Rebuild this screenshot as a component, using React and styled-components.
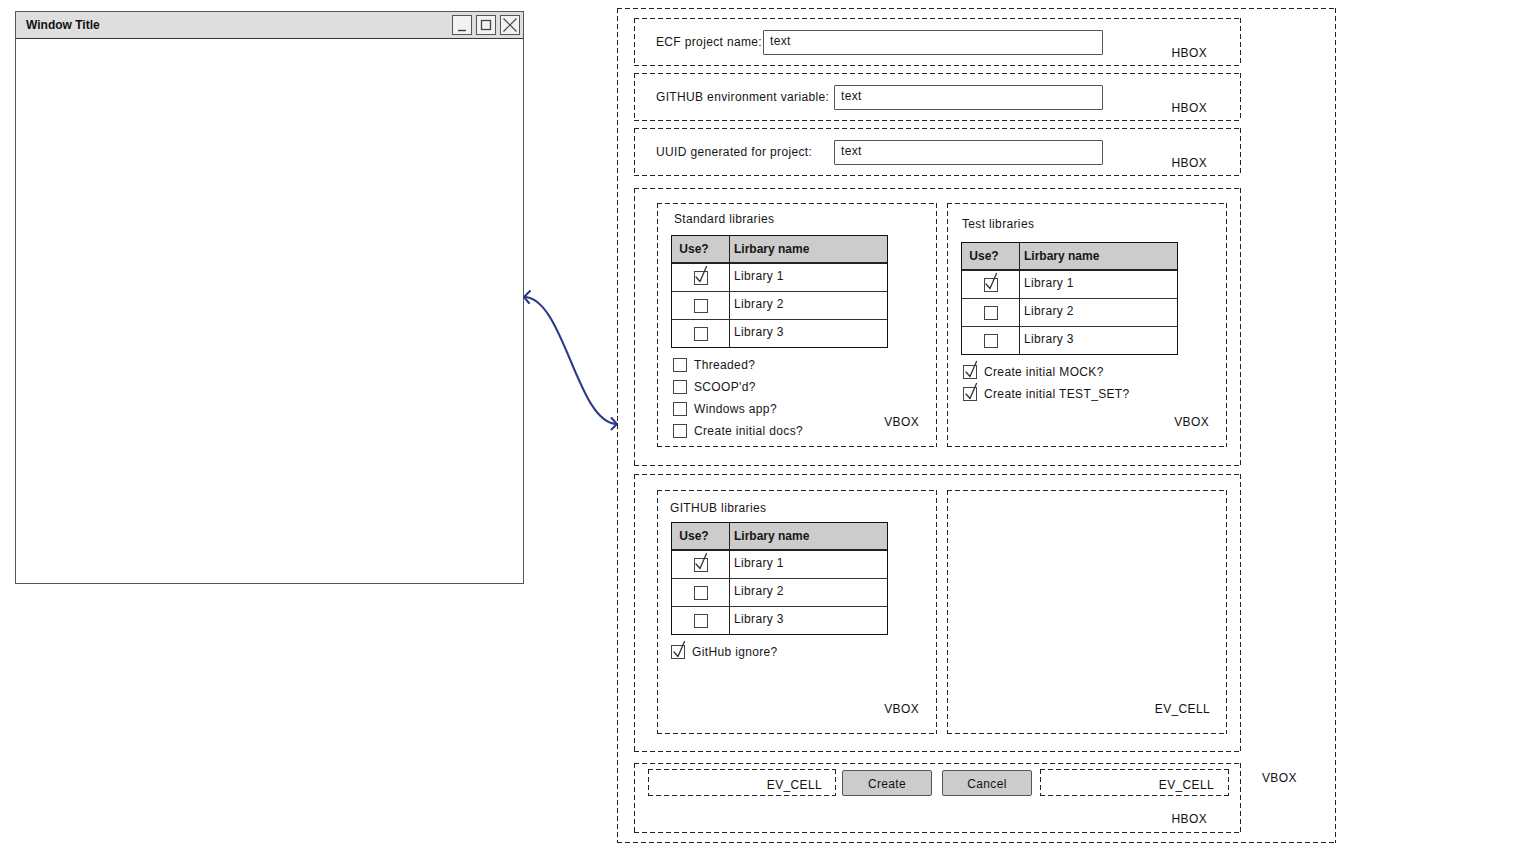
import React from 'react';
import styled, { createGlobalStyle, css } from 'styled-components';

const FONT = `"Liberation Sans", Arial, sans-serif`;

const GlobalStyle = createGlobalStyle`
  html, body { margin: 0; padding: 0; background: #fff; }
  body { font-family: ${FONT}; font-size: 12px; letter-spacing: 0.35px; color: #161616; }
`;

const dashed = css`
  background-image:
    linear-gradient(to right, #222 5px, transparent 5px),
    linear-gradient(to right, #222 5px, transparent 5px),
    linear-gradient(to bottom, #222 5px, transparent 5px),
    linear-gradient(to bottom, #222 5px, transparent 5px);
  background-size: 8px 1px, 8px 1px, 1px 8px, 1px 8px;
  background-position: 0 0, 0 100%, 0 0, 100% 0;
  background-repeat: repeat-x, repeat-x, repeat-y, repeat-y;
`;

const Canvas = styled.div`
  display: flex;
  align-items: flex-start;
  padding-left: 15px;
  width: 1531px;
  height: 854px;
  box-sizing: border-box;
  overflow: hidden;
`;

/* ---------- Window mockup ---------- */
const Window = styled.div`
  flex-shrink: 0;
  width: 509px;
  height: 573px;
  margin-top: 11px;
  box-sizing: border-box;
  border: 1px solid #555;
  background: #fff;
  display: flex;
  flex-direction: column;
`;

const TitleBar = styled.div`
  height: 27px;
  box-sizing: border-box;
  background: #dedede;
  border-bottom: 1.5px solid #333;
  display: flex;
  align-items: center;
  justify-content: space-between;
  padding: 0 3px 0 10px;
`;

const WinTitle = styled.span`
  font-weight: bold;
  font-size: 12px;
  letter-spacing: 0;
  color: #111;
`;

const WinButtons = styled.div`
  display: flex;
  gap: 4px;
`;

const WinButton = styled.div`
  width: 20px;
  height: 20px;
  box-sizing: border-box;
  border: 1.5px solid #555;
  background: #f2f2f2;
  display: flex;
  align-items: center;
  justify-content: center;
  svg { display: block; }
`;

/* ---------- Connector ---------- */
const Connector = styled.svg`
  flex-shrink: 0;
  width: 93px;
  height: 440px;
  overflow: visible;
`;

/* ---------- Layout containers ---------- */
const OuterVBox = styled.div`
  ${dashed};
  flex-shrink: 0;
  width: 719px;
  height: 835px;
  margin-top: 8px;
  box-sizing: border-box;
  padding: 10px 0 0 17px;
  display: flex;
  align-items: flex-start;
`;

const Column = styled.div`
  width: 607px;
  display: flex;
  flex-direction: column;
`;

const Tag = styled.span`
  font-size: 12px;
  line-height: 14px;
  color: #111;
  white-space: nowrap;
`;

const CornerTag = styled(Tag)`
  position: absolute;
  right: ${p => p.$r}px;
  bottom: ${p => p.$b}px;
`;

const OuterTag = styled(Tag)`
  align-self: flex-end;
  margin: 0 0 58px 21px;
`;

const FieldBox = styled.div`
  ${dashed};
  position: relative;
  height: 48px;
  box-sizing: border-box;
  margin-top: ${p => p.$mt}px;
  padding-left: 22px;
  display: flex;
  align-items: center;
`;

const FieldLabel = styled.span`
  width: ${p => p.$w}px;
  flex-shrink: 0;
  white-space: nowrap;
`;

const TextInput = styled.div`
  width: ${p => p.$w}px;
  height: 25px;
  box-sizing: border-box;
  border: 1.5px solid #555;
  border-radius: 1px;
  padding: 3px 6px 0;
  line-height: 14px;
  background: #fff;
`;

const PanelRow = styled.div`
  ${dashed};
  height: 278px;
  box-sizing: border-box;
  margin-top: ${p => p.$mt}px;
  padding: ${p => p.$pt}px 14px 0 23px;
  display: flex;
  align-items: flex-start;
  gap: 10px;
`;

const SubPanel = styled.div`
  ${dashed};
  position: relative;
  width: 280px;
  height: 244px;
  box-sizing: border-box;
  padding: ${p => p.$pt}px 0 0 14px;
  display: flex;
  flex-direction: column;
  align-items: flex-start;
`;

const PanelTitle = styled.div`
  line-height: 16px;
  margin-left: ${p => p.$indent}px;
  margin-bottom: ${p => p.$mb}px;
  white-space: nowrap;
`;

/* ---------- Table ---------- */
const Table = styled.div`
  width: 217px;
  box-sizing: border-box;
  border: 1px solid #111;
`;

const HeaderRow = styled.div`
  display: grid;
  grid-template-columns: 58px 1fr;
  height: 26px;
  background: #cccccc;
  border-bottom: 2px solid #222;
  font-weight: bold;
  letter-spacing: 0;
`;

const Row = styled.div`
  display: grid;
  grid-template-columns: 58px 1fr;
  height: 27px;
  border-top: ${p => (p.$first ? 'none' : '1px solid #333')};
`;

const Cell = styled.div`
  display: flex;
  align-items: center;
  justify-content: ${p => (p.$center ? 'center' : 'flex-start')};
  padding-left: ${p => (p.$center ? 0 : 4)}px;
  padding-bottom: ${p => (p.$raise ? 3 : 0)}px;
  border-right: ${p => (p.$divider ? '1px solid #222' : 'none')};
`;

/* ---------- Checkboxes ---------- */
const BoxWrap = styled.span`
  position: relative;
  display: inline-block;
  flex-shrink: 0;
  width: 14px;
  height: 14px;
  box-sizing: border-box;
  border: 1.5px solid #444;
  background: #fff;
  svg {
    position: absolute;
    left: -1.5px;
    top: -6.5px;
    overflow: visible;
  }
`;

const CheckList = styled.div`
  margin-top: 6px;
  padding-left: ${p => p.$pl}px;
  display: flex;
  flex-direction: column;
`;

const CheckItem = styled.div`
  height: 22px;
  display: flex;
  align-items: center;
  gap: 7px;
  white-space: nowrap;
`;

/* ---------- Bottom buttons ---------- */
const ButtonRow = styled.div`
  ${dashed};
  position: relative;
  height: 70px;
  box-sizing: border-box;
  margin-top: 11px;
  padding: 6px 0 0 14px;
  display: flex;
  align-items: flex-start;
`;

const EvCell = styled.div`
  ${dashed};
  position: relative;
  width: ${p => p.$w}px;
  height: 27px;
  margin-left: ${p => p.$ml}px;
  box-sizing: border-box;
`;

const Button = styled.div`
  width: 90px;
  height: 26px;
  margin-top: 1px;
  margin-left: ${p => p.$ml}px;
  box-sizing: border-box;
  border: 1.5px solid #555;
  border-radius: 2px;
  background: #cccccc;
  display: flex;
  align-items: center;
  justify-content: center;
  padding-top: 1px;
  color: #111;
`;

/* ---------- Pieces ---------- */
function Checkbox({ checked }) {
  return (
    <BoxWrap>
      {checked && (
        <svg width="16" height="20" viewBox="0 0 16 20">
          <path d="M3 12 L7 16.5 L13.5 1.5" fill="none" stroke="#333" strokeWidth="1.3" strokeLinejoin="round" strokeLinecap="round" />
        </svg>
      )}
    </BoxWrap>
  );
}

function LibTable({ rows }) {
  return (
    <Table>
      <HeaderRow>
        <Cell $divider>&nbsp;Use?</Cell>
        <Cell>Lirbary name</Cell>
      </HeaderRow>
      {rows.map((r, i) => (
        <Row key={r.name} $first={i === 0}>
          <Cell $divider $center><Checkbox checked={r.checked} /></Cell>
          <Cell $raise>{r.name}</Cell>
        </Row>
      ))}
    </Table>
  );
}

const libs = [
  { name: 'Library 1', checked: true },
  { name: 'Library 2', checked: false },
  { name: 'Library 3', checked: false },
];

const fields = [
  { label: 'ECF project name:', lw: 107, iw: 340, mt: 0 },
  { label: 'GITHUB environment variable:', lw: 178, iw: 269, mt: 7 },
  { label: 'UUID generated for project:', lw: 178, iw: 269, mt: 7 },
];

export default function App() {
  return (
    <>
      <GlobalStyle />
      <Canvas>
        <Window>
          <TitleBar>
            <WinTitle>Window Title</WinTitle>
            <WinButtons>
              <WinButton>
                <svg width="14" height="14" viewBox="0 0 14 14"><path d="M3 12.5 H11" stroke="#444" strokeWidth="1.4" /></svg>
              </WinButton>
              <WinButton>
                <svg width="14" height="14" viewBox="0 0 14 14"><rect x="2.5" y="2.5" width="9" height="9" fill="none" stroke="#444" strokeWidth="1.3" /></svg>
              </WinButton>
              <WinButton>
                <svg width="16" height="16" viewBox="0 0 16 16"><path d="M1.5 1.5 L14.5 14.5 M14.5 1.5 L1.5 14.5" stroke="#444" strokeWidth="1.2" /></svg>
              </WinButton>
            </WinButtons>
          </TitleBar>
        </Window>

        <Connector viewBox="0 0 93 440">
          <g fill="none" stroke="#2b3a8a" strokeWidth="2" strokeLinecap="round" strokeLinejoin="round">
            <path d="M0 297 C40 297, 53 424, 93 424" />
            <path d="M6 291 L0 297 L5 303" />
            <path d="M87.5 418 L93 424 L87.5 429.5" />
          </g>
        </Connector>

        <OuterVBox>
          <Column>
            {fields.map(f => (
              <FieldBox key={f.label} $mt={f.mt}>
                <FieldLabel $w={f.lw}>{f.label}</FieldLabel>
                <TextInput $w={f.iw}>text</TextInput>
                <CornerTag $r={34} $b={6}>HBOX</CornerTag>
              </FieldBox>
            ))}

            <PanelRow $mt={12} $pt={15}>
              <SubPanel $pt={8}>
                <PanelTitle $indent={3} $mb={8}>Standard libraries</PanelTitle>
                <LibTable rows={libs} />
                <CheckList $pl={2}>
                  <CheckItem><Checkbox />Threaded?</CheckItem>
                  <CheckItem><Checkbox />SCOOP'd?</CheckItem>
                  <CheckItem><Checkbox />Windows app?</CheckItem>
                  <CheckItem><Checkbox />Create initial docs?</CheckItem>
                </CheckList>
                <CornerTag $r={18} $b={18}>VBOX</CornerTag>
              </SubPanel>
              <SubPanel $pt={13}>
                <PanelTitle $indent={1} $mb={10}>Test libraries</PanelTitle>
                <LibTable rows={libs} />
                <CheckList $pl={2}>
                  <CheckItem><Checkbox checked />Create initial MOCK?</CheckItem>
                  <CheckItem><Checkbox checked />Create initial TEST_SET?</CheckItem>
                </CheckList>
                <CornerTag $r={18} $b={18}>VBOX</CornerTag>
              </SubPanel>
            </PanelRow>

            <PanelRow $mt={8} $pt={16}>
              <SubPanel $pt={10}>
                <PanelTitle $indent={-1} $mb={6}>GITHUB libraries</PanelTitle>
                <LibTable rows={libs} />
                <CheckList $pl={0}>
                  <CheckItem><Checkbox checked />GitHub ignore?</CheckItem>
                </CheckList>
                <CornerTag $r={18} $b={18}>VBOX</CornerTag>
              </SubPanel>
              <SubPanel $pt={0}>
                <CornerTag $r={17} $b={18}>EV_CELL</CornerTag>
              </SubPanel>
            </PanelRow>

            <ButtonRow>
              <EvCell $w={188} $ml={0}>
                <CornerTag $r={14} $b={4}>EV_CELL</CornerTag>
              </EvCell>
              <Button $ml={6}>Create</Button>
              <Button $ml={10}>Cancel</Button>
              <EvCell $w={189} $ml={8}>
                <CornerTag $r={15} $b={4}>EV_CELL</CornerTag>
              </EvCell>
              <CornerTag $r={34} $b={7}>HBOX</CornerTag>
            </ButtonRow>
          </Column>
          <OuterTag>VBOX</OuterTag>
        </OuterVBox>
      </Canvas>
    </>
  );
}
